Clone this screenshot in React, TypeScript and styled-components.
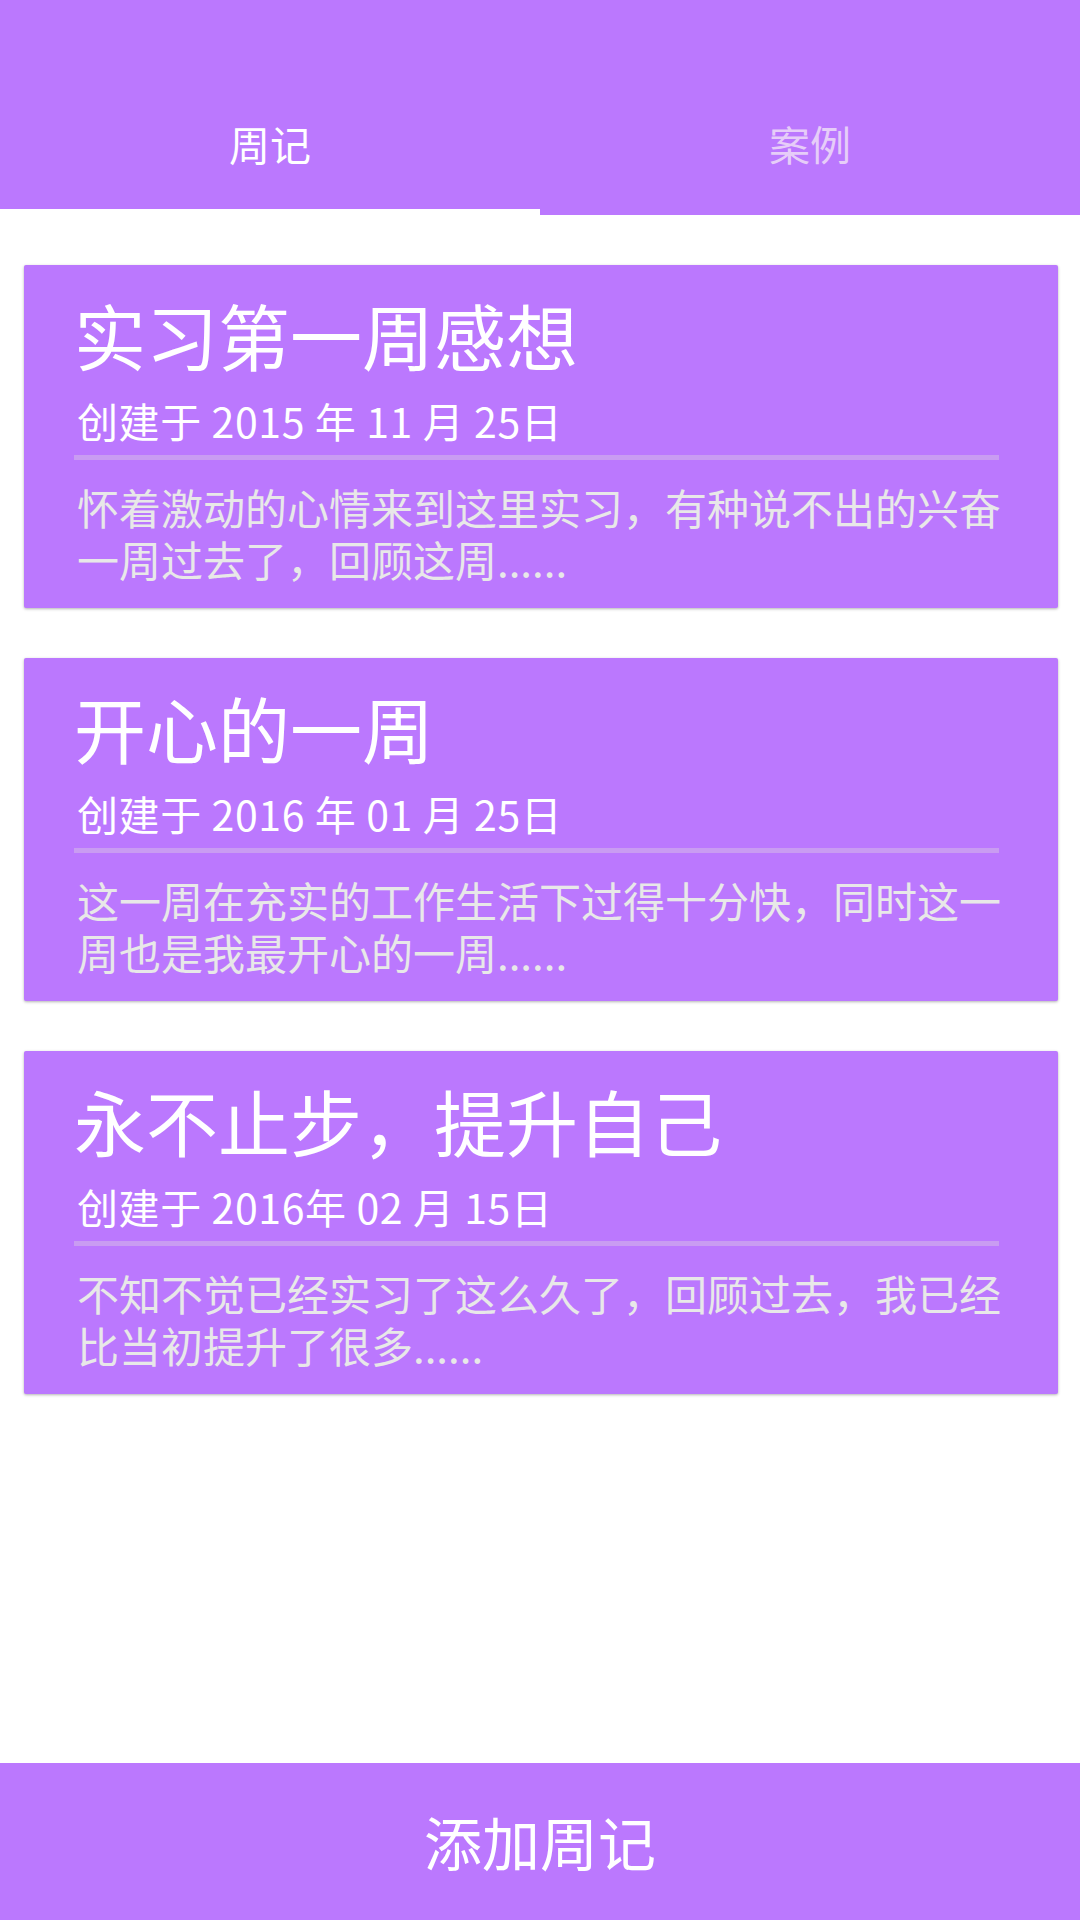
import React from "react";
import styled, { createGlobalStyle } from "styled-components";

const PURPLE = "#bb78fe";

const GlobalStyle = createGlobalStyle`
  html, body {
    margin: 0;
    padding: 0;
    background: #ffffff;
  }
  body {
    font-family: "Noto Sans CJK SC", "Noto Sans", sans-serif;
  }
  * { box-sizing: border-box; }
`;

const Page = styled.div`
  width: 1080px;
  min-height: 1920px;
  display: flex;
  flex-direction: column;
  background: #ffffff;
`;

const TabBar = styled.div`
  display: flex;
  height: 215px;
  background: ${PURPLE};
`;

const Tab = styled.div<{ $active?: boolean }>`
  flex: 1;
  display: flex;
  align-items: center;
  justify-content: center;
  padding-top: 78px;
  border-bottom: 6px solid ${(p) => (p.$active ? "#ffffff" : PURPLE)};
  font-size: 41px;
  line-height: 1.2;
  color: ${(p) => (p.$active ? "#ffffff" : "#e6cdf8")};
`;

const List = styled.div`
  flex: 1;
  display: flex;
  flex-direction: column;
  gap: 50px;
  padding: 50px 22px 0 24px;
`;

const Card = styled.div`
  background: ${PURPLE};
  border-radius: 2px;
  box-shadow: 0 1px 3px rgba(0, 0, 0, 0.3);
  padding: 27px 59px 23px 50px;
  display: flex;
  flex-direction: column;
  height: 343px;
`;

const Title = styled.div`
  font-size: 72px;
  line-height: 84px;
  color: #ffffff;
  white-space: nowrap;
`;

const DateLine = styled.div`
  margin-top: 20px;
  padding-left: 3px;
  font-size: 41px;
  line-height: 49px;
  letter-spacing: 0.6px;
  color: #ffffff;
  white-space: pre;
`;

const Divider = styled.div`
  margin-top: 10px;
  height: 5px;
  background: #c99cf2;
`;

const Body = styled.div`
  margin-top: 21px;
  padding-left: 3px;
  margin-right: -16px;
  font-size: 42px;
  line-height: 52px;
  color: #e8e8e8;
`;

const AddButton = styled.div`
  height: 157px;
  background: ${PURPLE};
  display: flex;
  align-items: center;
  justify-content: center;
  font-size: 58px;
  line-height: 1.2;
  color: #ffffff;
`;

type Entry = { title: string; date: string; body: string };

const entries: Entry[] = [
  {
    title: "实习第一周感想",
    date: "创建于 2015 年 11 月 25日",
    body: "怀着激动的心情来到这里实习，有种说不出的兴奋一周过去了，回顾这周......",
  },
  {
    title: "开心的一周",
    date: "创建于 2016 年 01 月 25日",
    body: "这一周在充实的工作生活下过得十分快，同时这一周也是我最开心的一周......",
  },
  {
    title: "永不止步，提升自己",
    date: "创建于 2016年 02 月 15日",
    body: "不知不觉已经实习了这么久了，回顾过去，我已经比当初提升了很多......",
  },
];

export default function App() {
  return (
    <>
      <GlobalStyle />
      <Page>
        <TabBar>
          <Tab $active>周记</Tab>
          <Tab>案例</Tab>
        </TabBar>
        <List>
          {entries.map((e) => (
            <Card key={e.title}>
              <Title>{e.title}</Title>
              <DateLine>{e.date}</DateLine>
              <Divider />
              <Body>{e.body}</Body>
            </Card>
          ))}
        </List>
        <AddButton>添加周记</AddButton>
      </Page>
    </>
  );
}
